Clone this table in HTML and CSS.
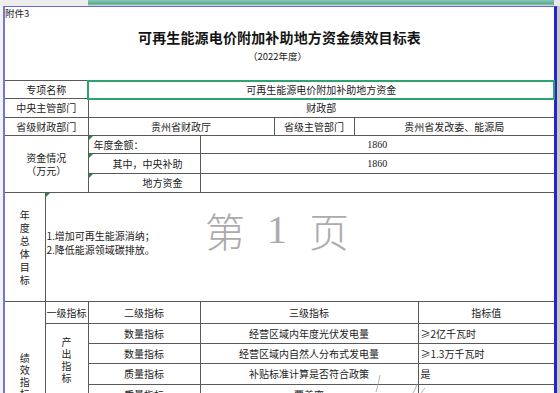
FILE: index.html
```html
<!DOCTYPE html>
<html lang="zh-CN">
<head>
<meta charset="utf-8">
<title>可再生能源电价附加补助地方资金绩效目标表</title>
<link rel="stylesheet" href="styles.css">
</head>
<body>
<div class="topbar"><div class="tb-left"></div><div class="tb-sel"></div><div class="tb-right"></div></div>
<div class="sheet">
  <div class="gutter"></div>
  <div class="page">
    <div class="head">
      <div class="attach">附件3</div>
      <div class="title">可再生能源电价附加补助地方资金绩效目标表</div>
      <div class="subtitle">（2022年度）</div>
    </div>
    <table class="grid">
      <colgroup>
        <col class="c1"><col class="c2"><col class="c3"><col class="c4"><col class="c5"><col class="c6"><col class="c7">
      </colgroup>
      <tr class="h18"><td colspan="2">专项名称</td><td colspan="5" class="sel">可再生能源电价附加补助地方资金</td></tr>
      <tr class="h19"><td colspan="2">中央主管部门</td><td colspan="5">财政部</td></tr>
      <tr class="h18"><td colspan="2">省级财政部门</td><td colspan="2">贵州省财政厅</td><td>省级主管部门</td><td colspan="2">贵州省发改委、能源局</td></tr>
      <tr class="h18"><td colspan="2" rowspan="3" class="wrap">资金情况<br>（万元）</td><td class="left mark">年度金额：</td><td colspan="4" class="num">1860</td></tr>
      <tr class="h20"><td class="right mark">其中，中央补助</td><td colspan="4" class="num">1860</td></tr>
      <tr class="h19"><td class="right mark">地方资金</td><td colspan="4"></td></tr>
      <tr class="h109"><td><div class="vert v13">年度总体目标</div></td><td colspan="6" class="goal mark"><p>1.增加可再生能源消纳；</p><p>2.降低能源领域碳排放。</p></td></tr>
      <tr class="h22"><td rowspan="7" class="top pad50"><div class="vert v12">绩效指标</div></td><td>一级指标</td><td>二级指标</td><td colspan="3">三级指标</td><td>指标值</td></tr>
      <tr class="h20"><td rowspan="6" class="top pad12"><div class="vert v12">产出指标</div></td><td>数量指标</td><td colspan="3">经营区域内年度光伏发电量</td><td class="left2">≥2亿千瓦时</td></tr>
      <tr class="h20"><td>数量指标</td><td colspan="3">经营区域内自然人分布式发电量</td><td class="left2">≥1.3万千瓦时</td></tr>
      <tr class="h21"><td>质量指标</td><td colspan="3">补贴标准计算是否符合政策</td><td class="left2">是</td></tr>
      <tr class="h20"><td>质量指标</td><td colspan="3">覆盖率</td><td class="left2"></td></tr>
      <tr class="h20"><td></td><td colspan="3"></td><td></td></tr>
      <tr class="h20"><td></td><td colspan="3"></td><td></td></tr>
    </table>
    <div class="watermark"><span class="wm-cjk">第</span><span class="wm-num">1</span><span class="wm-cjk">页</span></div>
    <svg class="scribble" width="70" height="24" viewBox="0 0 70 24">
      <path d="M13 3 C12 8 11 13 9 20" />
      <path d="M50 12 C49 15 48 18 46 21" />
      <path d="M58 16 C56 18 55 20 54 22" />
    </svg>
  </div>
  <div class="rest"></div>
</div>
</body>
</html>
```

FILE: styles.css
```css
* { box-sizing: border-box; margin: 0; padding: 0; }
html, body { width: 560px; height: 393px; overflow: hidden; background: #fff; }
body {
  font-family: "Noto Sans CJK SC", "Liberation Sans", sans-serif;
  font-size: 10px;
  color: #222;
}

.topbar { display: flex; height: 6px; }
.tb-left { width: 88px; background: #ededed; }
.tb-sel { width: 466px; background: linear-gradient(#8cc6b6, #5aa893 65%, #d6ebe4); }
.tb-right { flex: 1; background: #e9e9e9; }

.sheet { display: flex; height: 387px; }
.gutter { width: 3px; background: #f3f3f3; }
.page {
  position: relative;
  width: 554px;
  border-left: 2px solid #7a74d6;
  border-top: 1px solid #6b66d8;
  border-right: 3px solid #2626c6;
  background: #fff;
}
.rest { flex: 1; background: #c8c8c8; }

.head { height: 73px; display: flex; flex-direction: column; }
.attach { height: 19px; line-height: 13px; font-size: 9.5px; }
.title {
  height: 22px; line-height: 22px; text-align: center;
  font-size: 14px; font-weight: 700; color: #141414; letter-spacing: 0.15px;
}
.subtitle { height: 16px; line-height: 16px; text-align: center; font-size: 9.5px; padding-right: 4px; }

.grid {
  width: 549px;
  border-collapse: collapse;
  table-layout: fixed;
  border-left: hidden;
  border-right: hidden;
}
.c1 { width: 40px; } .c2 { width: 43px; } .c3 { width: 112px; } .c4 { width: 74px; }
.c5 { width: 80px; } .c6 { width: 64px; } .c7 { width: 136px; }

.grid td {
  border: 1px solid #5a5a5a;
  text-align: center;
  vertical-align: middle;
  white-space: nowrap;
  line-height: 12px;
  padding: 0;
}
.h18 { height: 18px; } .h19 { height: 19px; } .h20 { height: 20px; }
.h21 { height: 21px; } .h22 { height: 22px; } .h109 { height: 109px; }

.grid td.sel { outline: 2px solid #2ea26f; outline-offset: -1px; }
.grid td.wrap { line-height: 13px; }
.grid td.left { text-align: left; padding-left: 5px; }
.grid td.right { text-align: right; padding-right: 17px; }
.grid td.left2 { text-align: left; padding-left: 2px; }
.grid td.num { font-family: "Liberation Serif", serif; font-size: 10px; }
.grid td.top { vertical-align: top; }
.grid td.pad50 { padding-top: 50px; }
.grid td.pad12 { padding-top: 12px; }
.grid td.goal { text-align: left; padding: 0 0 8px 1px; line-height: 14px; }

.mark { position: relative; }
.mark::before {
  content: "";
  position: absolute; left: 0; top: 0;
  border-top: 4px solid #1e8f3c;
  border-right: 4px solid transparent;
}

.vert { width: 10px; margin: 0 auto; white-space: normal; word-break: break-all; }
.v13 { line-height: 13px; }
.v12 { line-height: 12px; }

.watermark {
  position: absolute;
  left: 200px; top: 203px;
  display: flex; gap: 22px;
  color: #ababab;
  font-size: 40px; line-height: 40px;
  pointer-events: none;
}
.wm-cjk { font-weight: 300; }
.wm-num { font-family: "Liberation Serif", serif; }

.scribble {
  position: absolute;
  left: 362px; top: 365px;
  fill: none;
  stroke: #9a9a9a;
  stroke-width: 0.8;
  pointer-events: none;
}
```
